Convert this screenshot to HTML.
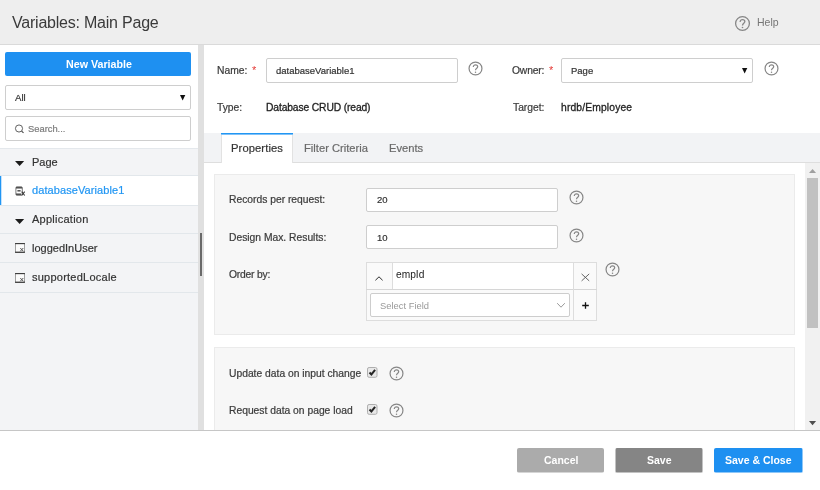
<!DOCTYPE html>
<html>
<head>
<meta charset="utf-8">
<title>Variables: Main Page</title>
<style>
*{box-sizing:border-box;margin:0;padding:0}
html,body{width:820px;height:490px;overflow:hidden;background:#fff}
body{font-family:"Liberation Sans",sans-serif;font-size:10.3px;color:#333;position:relative}
.abs{position:absolute}
.t{position:absolute;white-space:nowrap;line-height:14px;height:14px;will-change:transform}
#hdr{left:0;top:0;width:820px;height:45px;background:#eeeeee;border-bottom:1px solid #dadada}
#left{left:0;top:45px;width:198px;height:385px;background:#fff}
#split{left:198px;top:45px;width:6px;height:385px;background:#e0e0e0}
#thumb{left:200px;top:233px;width:2px;height:43px;background:#6a6a6a}
.box{position:absolute;background:#fff;border:1px solid #cecece;border-radius:2px}
#list{left:0;top:148px;width:198px;height:282px;background:#f3f4f6;border-top:1px solid #e4e8ec}
.row{position:absolute;left:0;width:198px;border-bottom:1px solid #e2e7eb}
.row.sel{background:linear-gradient(90deg,#2196f3 0,#2196f3 1px,#c4e2fc 1px,#c4e2fc 2px,#fff 2px)}
.caret{position:absolute;width:0;height:0;border-left:4.5px solid transparent;border-right:4.5px solid transparent;border-top:5px solid #1c1c1c}
.dd{position:absolute;width:0;height:0;border-left:2.7px solid transparent;border-right:2.7px solid transparent;border-top:5.4px solid #111}
#right{left:204px;top:45px;width:616px;height:385px;background:#fff}
#tabs{left:204px;top:133px;width:616px;height:30px;background:#f2f3f5;border-bottom:1px solid #dedede}
#tabact{left:221px;top:133px;width:72px;height:30px;background:#fff;border-left:1px solid #e2e2e2;border-right:1px solid #e2e2e2}
.panel{position:absolute;background:#f7f7f7;border:1px solid #ebebeb}
#sb{left:805px;top:163px;width:15px;height:267px;background:#f1f1f1}
#sbthumb{left:807px;top:178px;width:11px;height:150px;background:#c1c1c1}
#foot{left:0;top:430px;width:820px;height:60px;background:#fff;border-top:1px solid #c6c6c6}
.btn{position:absolute;top:448px;height:25px;border-radius:2px}
.bt{color:#fff;font-weight:bold}
.lbl{color:#3c3c3c;-webkit-text-stroke:0.22px #3c3c3c}
.sk{-webkit-text-stroke:0.2px currentColor}
.val{color:#1f1f1f;-webkit-text-stroke:0.3px #1f1f1f}
.red{color:#e53935}
.q{position:absolute;width:15px;height:15px;overflow:visible}
</style>
</head>
<body>
<svg width="0" height="0" style="position:absolute">
<defs>
<g id="qi" fill="none" stroke="#868686" stroke-width="1.2">
<circle cx="7.5" cy="7.5" r="6.45"/>
<path d="M5.3 6.0 C5.3 4.5 6.3 3.8 7.5 3.8 C8.8 3.8 9.7 4.6 9.7 5.7 C9.7 7.2 7.5 7.4 7.5 9.3"/>
<circle cx="7.5" cy="11.2" r="0.75" fill="#868686" stroke="none"/>
</g>
<g id="vi" fill="none" stroke="#333" stroke-width="1">
<rect x="0.5" y="0.5" width="9" height="8.9" fill="#fbfbfb" stroke="#8a8a8a" stroke-width="0.8"/>
<path d="M0.1 0.6 L9.9 0.6" stroke="#3a3a3a" stroke-width="1.1"/>
<path d="M0.1 9.2 L9.9 9.2" stroke="#2a2a2a" stroke-width="1.1"/>
<path d="M5.3 5.0 L8.3 8.2 M8.3 5.0 L5.3 8.2" stroke="#444" stroke-width="0.9"/>
</g>
<g id="ck">
<rect x="0.5" y="0.5" width="9.5" height="9.8" rx="1.6" fill="#e8e8e8" stroke="#aeaeae"/>
<path d="M2.5 5.5 L4.4 7.5 L8.1 2.9" fill="none" stroke="#262626" stroke-width="2"/>
</g>
</defs>
</svg>

<!-- header -->
<div id="hdr" class="abs"></div>
<div id="title" class="t" style="left:11.5px;top:15.5px;font-size:16px;letter-spacing:-0.22px;color:#3a3a3a">Variables: Main Page</div>
<svg class="q" style="left:734.5px;top:15.8px" viewBox="0 0 15 15"><g transform="translate(7.5 7.5) scale(1.07) translate(-7.5 -7.5)"><use href="#qi"/></g></svg>
<div id="help" class="t" style="left:756.5px;top:14.5px;font-size:10.5px;color:#757575">Help</div>

<!-- left -->
<div id="left" class="abs"></div>
<div class="abs" style="left:5px;top:52px;width:186px;height:24px;background:#1e90f1;border-radius:2px"></div>
<div id="newvar" class="t bt" style="left:65.5px;top:57px;font-size:10.7px">New Variable</div>
<div class="box" style="left:5px;top:85px;width:186px;height:25px"></div>
<div id="all" class="t sk" style="left:15px;top:91px;font-size:9.6px;color:#333">All</div>
<svg class="abs" style="left:179.5px;top:94.6px" width="6" height="6" viewBox="0 0 6 6"><polygon points="0,0 5.3,0 2.65,5.4" fill="#111"/></svg>
<div class="box" style="left:5px;top:116px;width:186px;height:25px"></div>
<svg class="abs" style="left:14px;top:124px" width="11" height="10" viewBox="0 0 11 10"><circle cx="5" cy="4.5" r="3.55" fill="none" stroke="#505050" stroke-width="0.9"/><path d="M7.6 7.1 L9.5 8.8" stroke="#444" stroke-width="1.1"/></svg>
<div id="search" class="t sk" style="left:28px;top:122px;font-size:9.35px;color:#7c7c7c">Search...</div>

<div id="list" class="abs"></div>
<div class="row" style="top:149px;height:27px"></div>
<svg class="abs" style="left:15.4px;top:161.4px" width="10" height="6" viewBox="0 0 10 6"><polygon points="0,0 9.2,0 4.6,5.1" fill="#1c1c1c"/></svg>
<div id="l1" class="t sk" style="left:31.5px;top:154.5px;font-size:11px;color:#333">Page</div>
<div class="row sel" style="top:176px;height:30px"></div>
<svg class="abs" style="left:15px;top:185.8px" width="11" height="10" viewBox="0 0 11 10"><g fill="none" stroke="#505050"><rect x="0.9" y="0.9" width="6.4" height="8.3" rx="0.9" stroke-width="1" stroke="#7a7a7a"/><path d="M1 1.7 H7.2" stroke-width="1.7"/><path d="M2.4 4.8 H5.6" stroke-width="1.5"/><path d="M1 8.3 H6.2" stroke-width="1.7"/><path d="M6.7 5.7 L9.7 9.5 M9.7 5.7 L6.7 9.5" stroke-width="1.1" stroke="#3a3a3a"/></g></svg>
<div id="l2" class="t sk" style="left:32px;top:182.5px;font-size:11px;letter-spacing:0.09px;color:#2196f3">databaseVariable1</div>
<div class="row" style="top:206px;height:28px"></div>
<svg class="abs" style="left:15.4px;top:219.3px" width="10" height="6" viewBox="0 0 10 6"><polygon points="0,0 9.2,0 4.6,5.1" fill="#1c1c1c"/></svg>
<div id="l3" class="t sk" style="left:32px;top:211.5px;font-size:11px;letter-spacing:0.25px;color:#333">Application</div>
<div class="row" style="top:234px;height:29px"></div>
<svg class="abs" style="left:15px;top:243px" width="10" height="10" viewBox="0 0 10 10"><use href="#vi"/></svg>
<div id="l4" class="t sk" style="left:32px;top:241px;font-size:11px;color:#333">loggedInUser</div>
<div class="row" style="top:263px;height:30px"></div>
<svg class="abs" style="left:15px;top:272.5px" width="10" height="10" viewBox="0 0 10 10"><use href="#vi"/></svg>
<div id="l5" class="t sk" style="left:32px;top:270px;font-size:11px;letter-spacing:0.24px;color:#333">supportedLocale</div>

<div id="split" class="abs"></div>
<div id="thumb" class="abs"></div>

<!-- right -->
<div id="right" class="abs"></div>
<div id="name" class="t lbl" style="left:217px;top:64px">Name:</div>
<div class="t red" style="left:252px;top:62.5px;font-size:11px">*</div>
<div class="box" style="left:266px;top:58px;width:192px;height:25px"></div>
<div id="nameval" class="t sk" style="left:276px;top:64px;font-size:9.5px;color:#333">databaseVariable1</div>
<svg class="q" style="left:468.4px;top:61.1px" viewBox="0 0 15 15"><use href="#qi"/></svg>

<div id="owner" class="t lbl" style="left:512px;top:64px;letter-spacing:-0.15px">Owner:</div>
<div class="t red" style="left:549px;top:62.5px;font-size:11px">*</div>
<div class="box" style="left:561px;top:58px;width:192px;height:25px"></div>
<div id="ownerval" class="t sk" style="left:571px;top:64px;font-size:9.5px;color:#333">Page</div>
<svg class="abs" style="left:741.7px;top:67.6px" width="6" height="6" viewBox="0 0 6 6"><polygon points="0,0 5.3,0 2.65,5.4" fill="#111"/></svg>
<svg class="q" style="left:764px;top:61.3px" viewBox="0 0 15 15"><use href="#qi"/></svg>

<div id="type" class="t lbl" style="left:217px;top:101px">Type:</div>
<div id="typeval" class="t val" style="left:266px;top:101px;letter-spacing:-0.13px">Database CRUD (read)</div>
<div id="target" class="t lbl" style="left:513px;top:101px">Target:</div>
<div id="targetval" class="t val" style="left:561px;top:101px;letter-spacing:0.15px">hrdb/Employee</div>

<div id="tabs" class="abs"></div>
<div id="tabact" class="abs"></div>
<div class="abs" style="left:221px;top:133px;width:72px;height:2px;background:linear-gradient(180deg,#2196f3 0,#2196f3 1px,#7fc1f8 1px)"></div>
<div id="tab1" class="t sk" style="left:231px;top:141px;font-size:11.2px;letter-spacing:0.1px;color:#333">Properties</div>
<div id="tab2" class="t sk" style="left:304px;top:141px;font-size:11.2px;color:#6a6a6a">Filter Criteria</div>
<div id="tab3" class="t sk" style="left:389px;top:141px;font-size:11.2px;color:#6a6a6a">Events</div>

<div class="panel" style="left:214px;top:174px;width:581px;height:161px"></div>
<div id="rpr" class="t lbl" style="left:228.5px;top:192.5px">Records per request:</div>
<div class="box" style="left:366px;top:188px;width:192px;height:24px"></div>
<div id="v20" class="t sk" style="left:377.3px;top:192.5px;font-size:9.5px">20</div>
<svg class="q" style="left:568.8px;top:190.4px" viewBox="0 0 15 15"><use href="#qi"/></svg>

<div id="dmr" class="t lbl" style="left:228.5px;top:231px">Design Max. Results:</div>
<div class="box" style="left:366px;top:225px;width:192px;height:24px"></div>
<div id="v10" class="t sk" style="left:377px;top:231px;font-size:9.5px">10</div>
<svg class="q" style="left:568.8px;top:228px" viewBox="0 0 15 15"><use href="#qi"/></svg>

<div id="ob" class="t lbl" style="left:229.3px;top:268px;letter-spacing:-0.2px">Order by:</div>
<div class="abs" style="left:366px;top:262px;width:231px;height:59px;border:1px solid #dddddd;background:#fafafa"></div>
<div class="abs" style="left:392px;top:262px;width:182px;height:28px;border:1px solid #dddddd;background:#fff"></div>
<div class="abs" style="left:366px;top:289px;width:231px;height:1px;background:#d6d6d6"></div>
<div class="abs" style="left:573px;top:262px;width:1px;height:59px;background:#dddddd"></div>
<svg class="abs" style="left:374px;top:274.5px" width="10" height="7" viewBox="0 0 10 7"><path d="M1.4 5.3 L5 1.8 L8.6 5.3" fill="none" stroke="#222" stroke-width="0.95"/></svg>
<div id="empid" class="t" style="left:396.3px;top:268px;font-size:10.2px;color:#222">empId</div>
<svg class="abs" style="left:581px;top:273px" width="9" height="9" viewBox="0 0 9 9"><path d="M0.6 0.9 L8.2 7.9 M8.2 0.9 L0.6 7.9" fill="none" stroke="#555" stroke-width="0.9"/></svg>
<div class="box" style="left:370px;top:293px;width:200px;height:24px;border-color:#cdcdcd"></div>
<div id="selfield" class="t" style="left:379.5px;top:299px;font-size:9.4px;color:#999">Select Field</div>
<svg class="abs" style="left:556px;top:301.5px" width="10" height="7" viewBox="0 0 10 7"><path d="M1.2 1.2 L5 5.2 L8.8 1.2" fill="none" stroke="#999" stroke-width="1"/></svg>
<svg class="abs" style="left:581px;top:301px" width="9" height="9" viewBox="0 0 9 9"><path d="M4.5 1.2 L4.5 7.8 M1.2 4.5 L7.8 4.5" fill="none" stroke="#111" stroke-width="1.3"/></svg>
<svg class="q" style="left:604.8px;top:261.8px" viewBox="0 0 15 15"><use href="#qi"/></svg>

<div class="panel" style="left:214px;top:347px;width:581px;height:90px"></div>
<div id="udic" class="t lbl" style="left:228.5px;top:367px">Update data on input change</div>
<div id="rdpl" class="t lbl" style="left:228.5px;top:404px">Request data on page load</div>
<svg class="abs" style="left:366.8px;top:367px" width="11" height="11" viewBox="0 0 11 11"><use href="#ck"/></svg>
<svg class="abs" style="left:366.8px;top:404px" width="11" height="11" viewBox="0 0 11 11"><use href="#ck"/></svg>
<svg class="q" style="left:388.8px;top:366.3px" viewBox="0 0 15 15"><use href="#qi"/></svg>
<svg class="q" style="left:388.8px;top:403.4px" viewBox="0 0 15 15"><use href="#qi"/></svg>

<!-- scrollbar -->
<div id="sb" class="abs"></div>
<div id="sbthumb" class="abs"></div>
<svg class="abs" style="left:809px;top:169px" width="8" height="5" viewBox="0 0 8 5"><polygon points="0,3.9 3.55,0 7.1,3.9" fill="#a0a0a0"/></svg>
<svg class="abs" style="left:809px;top:421px" width="8" height="5" viewBox="0 0 8 5"><polygon points="0,0 7.1,0 3.55,4.3" fill="#4e4e4e"/></svg>

<!-- footer -->
<div id="foot" class="abs"></div>
<div class="btn" style="left:517px;width:87px;background:linear-gradient(180deg,#ababab 0,#ababab 24px,#d5d5d5 24px)"></div>
<div id="bcancel" class="t bt" style="left:543.5px;top:452.5px;font-size:10.5px">Cancel</div>
<div class="btn" style="left:615px;width:88px;background:linear-gradient(90deg,#c2c2c2 0,#c2c2c2 1px,rgba(0,0,0,0) 1px,rgba(0,0,0,0) 87px,#c2c2c2 87px),linear-gradient(180deg,#858585 0,#858585 24px,#c2c2c2 24px)"></div>
<div id="bsave" class="t bt" style="left:647.3px;top:452.5px;font-size:10.5px">Save</div>
<div class="btn" style="left:714px;width:89px;background:linear-gradient(270deg,#8ec7f8 0,#8ec7f8 1px,rgba(0,0,0,0) 1px),linear-gradient(180deg,#1e90f1 0,#1e90f1 24px,#8ec7f8 24px)"></div>
<div id="bsc" class="t bt" style="left:725.3px;top:452.5px;font-size:10.5px">Save &amp; Close</div>
</body>
</html>
